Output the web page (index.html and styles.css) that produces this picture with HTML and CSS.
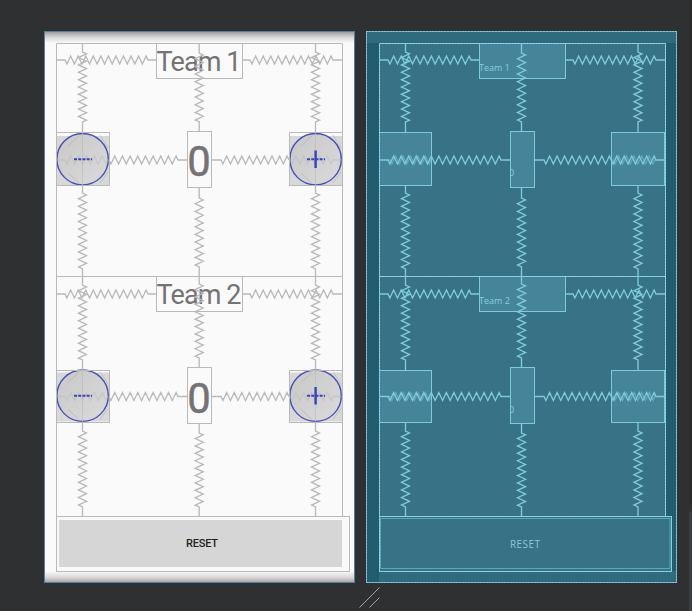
FILE: index.html
```
<!DOCTYPE html>
<html lang="en">
<head>
<meta charset="utf-8">
<title>Layout editor</title>
<link rel="stylesheet" href="styles.css">
</head>
<body>
<main class="editor">
  <div class="surfaces">
    <svg class="surface preview" viewBox="44 31 311 552" data-offset="0" role="img" aria-label="Design preview">
      <defs>
        <linearGradient id="top-shade" x2="0" y2="1"><stop offset="0" stop-color="#a09f9f"/><stop offset=".5" stop-color="#d9d8d8"/><stop offset="1" stop-color="#fafafa"/></linearGradient>
        <linearGradient id="bottom-shade" x2="0" y2="1"><stop offset="0" stop-color="#fafafa"/><stop offset=".55" stop-color="#dbdad9"/><stop offset="1" stop-color="#a9a9aa"/></linearGradient>
        <linearGradient id="disc" x2="1" y2="1"><stop offset="0" stop-color="#c8c8c9"/><stop offset="1" stop-color="#dadada"/></linearGradient>
      </defs>
      <rect class="page" x="44" y="31" width="311" height="552"/>
      <rect x="45" y="32" width="309" height="11" fill="url(#top-shade)"/>
      <rect x="45" y="571" width="309" height="11" fill="url(#bottom-shade)"/>
      <rect class="page" x="56" y="43" width="287" height="529"/>
      <rect class="reset-fill" x="59" y="520" width="283" height="47"/>
      <rect class="page" x="343" y="516" width="7" height="56"/>
      <g id="round-button">
        <rect class="button-box" x="57" y="136" width="52" height="49"/>
        <circle class="disc" cx="82.6" cy="159.2" r="25.7" fill="url(#disc)"/>
        <path class="faint" d="M68 146L79 136M68 173L79 183M100 135L108 148M100 183L108 172"/>
      </g>
      <use href="#round-button" x="233"/>
      <use href="#round-button" y="236.5"/>
      <use href="#round-button" x="233" y="236.5"/>
      <text class="team" x="156.5" y="70.5" textLength="85">Team 1</text>
      <text class="team" x="156.5" y="303.5" textLength="85">Team 2</text>
      <text class="score" x="187.3" y="176" textLength="23.5" lengthAdjust="spacingAndGlyphs">0</text>
      <text class="score" x="187.3" y="412.5" textLength="23.5" lengthAdjust="spacingAndGlyphs">0</text>
      <text class="reset" x="186" y="547" textLength="32">RESET</text>
      <g class="lines"></g>
      <path class="sign" d="M74 159.3H92M307 159.3H325M74 395.8H92M307 395.8H325"/>
      <path class="sign solid" d="M315.6 150.5V168M315.6 387V404.5"/>
      <g class="frames">
        <path d="M56.5 516.5V43.5H342.5V516.5M56.5 276.5H342.5"/>
        <rect x="56.5" y="516.5" width="293" height="55"/>
        <rect x="156.5" y="43.5" width="86" height="35"/><rect x="156.5" y="276.5" width="86" height="35"/>
        <rect x="187.5" y="131.5" width="24" height="56"/><rect x="187.5" y="367.5" width="24" height="56"/>
        <rect x="56.5" y="132.5" width="53" height="53"/><rect x="289.5" y="132.5" width="53" height="53"/>
        <rect x="56.5" y="370.5" width="53" height="52"/><rect x="289.5" y="370.5" width="53" height="52"/>
      </g>
      <rect class="outline" x="44.5" y="31.5" width="310" height="551"/>
    </svg>
    <svg class="surface blueprint" viewBox="366 31 311 552" data-offset="323" role="img" aria-label="Blueprint">
      <defs>
        <clipPath id="score-clip"><rect x="511" y="131" width="24" height="293"/></clipPath>
      </defs>
      <rect class="margin" x="366" y="31" width="311" height="552"/>
      <rect class="margin-band" x="366" y="31" width="311" height="12"/>
      <rect class="margin-band" x="379" y="571" width="298" height="12"/>
      <rect class="paper" x="379" y="43" width="287" height="529"/>
      <rect class="paper" x="379" y="516" width="293" height="56"/>
      <g class="frames">
        <path d="M379.5 516.5V43.5H665.5V516.5M379.5 276.5H665.5"/>
        <rect x="379.5" y="516.5" width="292" height="55"/>
        <path class="inner" d="M380.5 518.5H670V568.5H380.5z"/>
        <g class="widget">
          <rect x="479.5" y="43.5" width="86" height="35"/><rect x="479.5" y="276.5" width="86" height="35"/>
          <rect x="510.5" y="131.5" width="24" height="56"/><rect x="510.5" y="367.5" width="24" height="56"/>
          <rect x="379.5" y="132.5" width="52" height="53"/><rect x="611.5" y="132.5" width="53" height="53"/>
          <rect x="379.5" y="370.5" width="52" height="52"/><rect x="611.5" y="370.5" width="53" height="52"/>
        </g>
        <path class="dots" d="M379.5 571V43.5H665.5V516.5M379.5 276.5H665.5M379.5 516.5H671.5V571.5H379.5"/>
      </g>
      <g class="lines"></g>
      <text class="label" x="479" y="71" textLength="31">Team 1</text>
      <text class="label" x="479" y="304" textLength="31">Team 2</text>
      <g clip-path="url(#score-clip)">
        <text class="label" x="509" y="176">0</text>
        <text class="label" x="509" y="413">0</text>
      </g>
      <text class="label big" x="510" y="548.3" textLength="30">RESET</text>
      <rect class="outline" x="366.5" y="31.5" width="310" height="551"/>
      <rect class="outline dots" x="366.5" y="31.5" width="310" height="551"/>
    </svg>
  </div>
  <svg class="grip" viewBox="0 0 22 22"><path d="M.5 20.5L20.5 .5M10.5 20.5L20.5 10.5"/></svg>
  <div class="scroll-edge"></div>
</main>
<script src="springs.js"></script>
</body>
</html>
```

FILE: styles.css
```
body {
  margin: 0;
  background: #2f3032;
  overflow: hidden;
}

.editor {
  position: relative;
  box-sizing: border-box;
  width: 692px;
  height: 611px;
  padding: 31px 15px 0 44px;
}

.surfaces {
  display: flex;
  gap: 11px;
}

.surface {
  display: block;
  flex: none;
  width: 311px;
  height: 552px;
}

.surface path,
.surface .frames rect,
.outline {
  fill: none;
}

.grip {
  display: block;
  width: 22px;
  height: 22px;
  margin: 4px 0 0 315px;
  fill: none;
  stroke: #a4a4a4;
}

.scroll-edge {
  position: absolute;
  right: 0;
  top: 0;
  width: 3px;
  height: 611px;
  background: linear-gradient(#292a2c 505px, #303133 505px 512px, #3b3e40 512px);
}

.page {
  fill: #fafafa;
}

.preview .outline {
  stroke: #55809f;
}

.preview .frames,
.preview .lines {
  fill: none;
  stroke: #b9b9b9;
}

.lines .spring {
  stroke-width: 1.35;
}

.reset-fill {
  fill: #d6d6d6;
}

.button-box {
  fill: #d8d8d8;
}

.disc {
  stroke: #4650b4;
  stroke-width: 1.4;
}

.faint {
  stroke: #aaa;
  opacity: .5;
}

.sign {
  stroke: #3843b5;
  stroke-width: 2;
  stroke-dasharray: 3 1.2;
}

.sign.solid {
  stroke-width: 2.4;
  stroke-dasharray: none;
}

.team,
.score {
  font-family: Roboto, sans-serif;
  fill: #737373;
}

.team {
  font-size: 27px;
}

.score {
  font-size: 43px;
  stroke: #737373;
  stroke-width: .5;
}

.reset {
  font: 500 11px Roboto, sans-serif;
  fill: #222;
}

.margin {
  fill: #225d6f;
}

.margin-band {
  fill: #2f6a7d;
}

.paper {
  fill: #387286;
}

.blueprint .frames {
  stroke: #7ccbdb;
}

.blueprint .frames .widget rect {
  fill: #468599;
}

.blueprint .frames .inner {
  stroke: #5aa7ba;
}

.blueprint .lines {
  fill: none;
  stroke: #7fcbdb;
}

.blueprint .outline {
  stroke: #69abc0;
}

.blueprint .dots {
  stroke: #a2dce8;
  stroke-dasharray: 1 2;
}

.label {
  font: 9px "Open Sans", sans-serif;
  fill: #86cddb;
}

.label.big {
  font-size: 10px;
}
```

FILE: springs.js
```
// A constraint is a straight lead, a zigzag section, and another lead.
function spring(start, zigStart, zigEnd, end, axis, vertical) {
  const count = Math.round((zigEnd - zigStart) / 3.75);
  const step = (zigEnd - zigStart) / count;
  const points = [[start, axis], [zigStart, axis]];
  for (let i = 0; i < count; i++) {
    points.push([zigStart + (i + 0.5) * step, axis + (i % 2 ? -4 : 4)]);
  }
  points.push([zigEnd, axis], [end, axis]);
  const coords = points.map(([a, b]) => (vertical ? `${b} ${a}` : `${a} ${b}`));
  return `<path class="spring" d="M${coords.join("L")}"/>`;
}

document.querySelectorAll(".surface").forEach((surface) => {
  const dx = Number(surface.dataset.offset);
  const blue = dx > 0;
  const horizontal = (a, b, c, d, y) => spring(a + dx, b + dx, c + dx, d + dx, y, false);
  let out = "";

  for (const y of [60, 294]) {
    out += horizontal(56, 65, 148, 156, y);
    out += horizontal(242, 250, 333, 342, y);
  }
  for (const y of [160, 396.5]) {
    if (blue) {
      out += horizontal(56, 65, 178, 187, y);
      out += horizontal(211, 221, 333, 342, y);
      out += `<g opacity=".5">${horizontal(65, 67, 108, 108, y)}${horizontal(288, 290, 332, 333, y)}</g>`;
    } else {
      out += horizontal(109, 109, 178, 187, y);
      out += horizontal(211, 221, 289, 289, y);
      out += `<g opacity=".45">${horizontal(56, 65, 108, 109, y)}${horizontal(289, 290, 333, 342, y)}</g>`;
    }
  }
  const columns = blue ? [405.5, 638] : [82.5, 315.5];
  for (const x of columns) {
    out += spring(43, 52, 122, 132, x, true);
    out += spring(185, 193, 269, 276, x, true);
    out += spring(276, 285, 360, 370, x, true);
    out += spring(423, 431, 507, 516, x, true);
    if (!blue) {
      out += `<path opacity=".6" d="M${x} 132V185M${x} 370V423"/>`;
    }
  }
  const center = blue ? 521.5 : 199.2;
  out += spring(43, 53, 122, 131, center, true);
  out += spring(187, 198, 267, 276, center, true);
  out += spring(276, 284, 358, 367, center, true);
  out += spring(424, 433, 507, 516, center, true);
  surface.querySelector(".lines").innerHTML = out;
});
```
